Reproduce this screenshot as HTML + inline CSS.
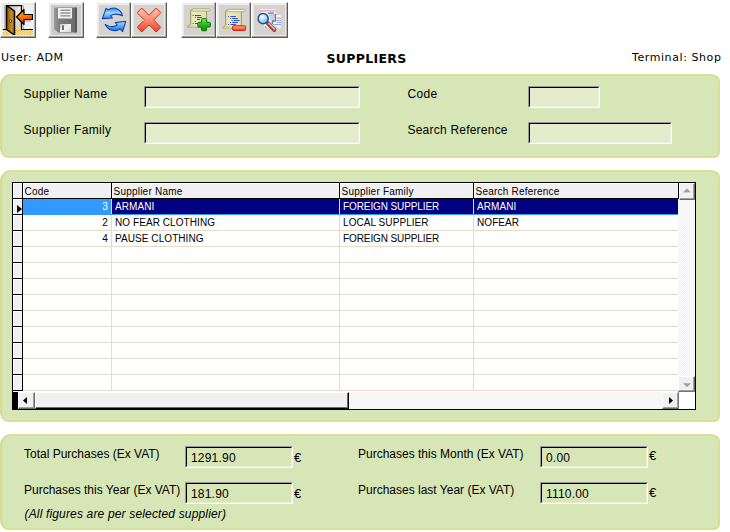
<!DOCTYPE html>
<html>
<head>
<meta charset="utf-8">
<title>Suppliers</title>
<style>
html,body{margin:0;padding:0;background:#fff;}
body{width:730px;height:532px;position:relative;overflow:hidden;font-family:"Liberation Sans",sans-serif;color:#000;}
.abs{position:absolute;}
.t{position:absolute;white-space:nowrap;line-height:14px;font-size:12px;font-family:"Liberation Sans",sans-serif;}
.ls{letter-spacing:0.35px;}
.v{font-family:"DejaVu Sans","Liberation Sans",sans-serif;font-size:11px;line-height:14px;}
.panel{position:absolute;left:0;width:716px;background:#d7e6b6;border:2px solid #d4e092;border-left-color:#d3df8e;border-radius:11px 10px 6px 8px / 11px 7px 6px 10px;box-sizing:content-box;}
.btn{position:absolute;top:2px;width:36px;height:36px;box-sizing:border-box;background:#ebebeb;border-top:1px solid #fff;border-left:1px solid #fff;border-right:1px solid #5a5a5a;border-bottom:1px solid #5a5a5a;}
.btn:after{content:"";position:absolute;left:0;top:0;right:0;bottom:0;border-right:1px solid #b4b4b4;border-bottom:1px solid #a0a0a0;}
.btn svg{position:absolute;left:2px;top:2px;}
.inp{position:absolute;box-sizing:border-box;height:22px;background:#e3edcc;border-top:1px solid #9a9a9a;border-left:1px solid #9a9a9a;border-right:1px solid #fff;border-bottom:1px solid #fff;}
.inp:after{content:"";position:absolute;left:0;top:0;right:0;bottom:0;border-top:1px solid #000;border-left:1px solid #000;border-right:1px solid #e9ece2;border-bottom:1px solid #e9ece2;}
.out{background:transparent;}
.out:after{border-right-color:#e6eed2;border-bottom-color:#e6eed2;}
/* grid */
#grid{position:absolute;left:12px;top:182px;width:684px;height:228px;background:#fff;overflow:hidden;}
#grid .h{position:absolute;top:1px;height:15px;background:#f0f0f0;box-sizing:border-box;border-top:1px solid #fff;border-left:1px solid #fff;}
#grid .hl{position:absolute;background:#000;}
#grid .gl{position:absolute;background:#e5dbc6;}
#grid .c{position:absolute;white-space:nowrap;font-size:10px;line-height:14px;letter-spacing:0.07px;font-family:"Liberation Sans",sans-serif;}
#grid .rh{position:absolute;left:1px;width:9px;height:15px;background:#f0f0f0;border-top:1px solid #fff;border-left:1px solid #fff;box-sizing:border-box;}
.sb{position:absolute;background:#f0f0f0;box-sizing:border-box;border-top:1px solid #fff;border-left:1px solid #fff;border-right:1px solid #696969;border-bottom:1px solid #696969;box-shadow:inset -1px -1px 0 #a0a0a0;}
.track{position:absolute;background:repeating-conic-gradient(#ffffff 0% 25%, #efefef 0% 50%) 0 0/2px 2px;}
</style>
</head>
<body>

<!-- toolbar -->
<div class="btn" id="b1" style="left:0px;width:36px"><svg width="30" height="30" viewBox="3 5 30 30"><defs><linearGradient id="dg" x1="0" y1="0" x2="1" y2="0"><stop offset="0" stop-color="#8a5200"/><stop offset="0.6" stop-color="#c98a20"/><stop offset="1" stop-color="#b87410"/></linearGradient><linearGradient id="ag" x1="0" y1="0" x2="0.3" y2="1"><stop offset="0" stop-color="#ffb400"/><stop offset="0.55" stop-color="#ff7a00"/><stop offset="1" stop-color="#f02800"/></linearGradient><linearGradient id="rg" x1="0" y1="0" x2="1" y2="1"><stop offset="0" stop-color="#b4ac9c"/><stop offset="0.5" stop-color="#ece8e0"/><stop offset="1" stop-color="#ccc4b4"/></linearGradient><pattern id="fl" width="3" height="2" patternUnits="userSpaceOnUse"><rect width="3" height="2" fill="#fff0d0"/><rect width="1.5" height="1" fill="#ffb02c"/><rect x="1.5" y="1" width="1.5" height="1" fill="#ffb02c"/></pattern></defs><rect x="3" y="5" width="30" height="30" fill="#f0f0f0"/><rect x="4" y="5" width="1" height="25" fill="#b8b8b8"/><rect x="23" y="5" width="1" height="25" fill="#b8b8b8"/><rect x="3" y="30" width="30" height="5" fill="url(#fl)"/><rect x="6.5" y="5.5" width="15" height="24" fill="url(#rg)" stroke="#000" stroke-width="1.3"/><rect x="15" y="27" width="6" height="3" fill="url(#fl)"/><rect x="3" y="29" width="4" height="1" fill="#000"/><rect x="21" y="29" width="12" height="1" fill="#000"/><rect x="24" y="20" width="7" height="2" fill="#c0c0c8"/><polygon points="6.5,5.5 14.5,11.2 14.5,35 6.5,29.5" fill="url(#dg)" stroke="#000" stroke-width="1.5" stroke-linejoin="round"/><rect x="9.6" y="19.8" width="1.8" height="2.6" rx="0.8" fill="#fff6a0" stroke="#000" stroke-width="0.7"/><polygon points="16.5,17 24,9.5 24,14.5 32.5,14.5 32.5,19.5 24,19.5 24,24.5" fill="url(#ag)" stroke="#000" stroke-width="1.2" stroke-linejoin="round"/></svg></div>
<div class="btn" id="b2" style="left:48px;width:36px"><svg width="30" height="30" viewBox="51 5 30 30"><defs><linearGradient id="sg" x1="0" y1="0" x2="1" y2="0"><stop offset="0" stop-color="#9a9a9a"/><stop offset="0.25" stop-color="#7c7c7c"/><stop offset="1" stop-color="#6a6a6a"/></linearGradient><linearGradient id="sl" x1="0" y1="0" x2="1" y2="1"><stop offset="0" stop-color="#c8c8c8"/><stop offset="0.5" stop-color="#f4f4f4"/><stop offset="1" stop-color="#d8d8d8"/></linearGradient></defs><rect x="51" y="5" width="30" height="30" fill="#cdcdcd"/><path d="M54.5,7.5 H76 Q77,7.5 77,8.5 V31.5 Q77,32.5 76,32.5 H58 L54,29 V8 Q54,7.5 54.5,7.5 Z" fill="url(#sg)"/><path d="M76,7.5 Q77,7.5 77,8.5 V31.5 Q77,32.5 76,32.5 H75 V7.5 Z" fill="#585858"/><rect x="58" y="8" width="14" height="10.5" fill="#efefef"/><rect x="60.5" y="9.6" width="10" height="1.3" fill="#8c8c8c"/><rect x="60.5" y="12.4" width="10" height="1.3" fill="#8c8c8c"/><rect x="60.5" y="15.2" width="10" height="1.3" fill="#8c8c8c"/><rect x="60" y="24" width="11" height="8" fill="url(#sl)"/><rect x="62" y="25.3" width="2" height="4.8" fill="#707070"/></svg></div>
<div class="btn" id="b3" style="left:96px;width:35px"><svg width="30" height="30" viewBox="5 5 30 30"><defs><linearGradient id="bg1" x1="0" y1="0" x2="0" y2="1"><stop offset="0" stop-color="#2a80e8"/><stop offset="0.45" stop-color="#a4d6ff"/><stop offset="1" stop-color="#3a88ea"/></linearGradient><linearGradient id="bg2" x1="0" y1="0" x2="0" y2="1"><stop offset="0" stop-color="#b4dcff"/><stop offset="0.5" stop-color="#58a8f4"/><stop offset="1" stop-color="#1a60d0"/></linearGradient></defs><rect x="5" y="5" width="30" height="30" fill="#d6d3ce"/><path d="M12,8.4 L8.4,18.6 L18.4,18 L16.6,15.6 C20,13.6 24.6,13.8 28.6,15.8 C26.5,9.2 20,5.8 14.2,9.8 Z" fill="url(#bg1)" stroke="#0a44b4" stroke-width="1.1" stroke-linejoin="round"/><path d="M21.2,22.6 L31.8,21.2 L28.6,31.6 L26.2,29 C20.6,32.4 14.6,30.4 11.2,24.4 C15.4,27 19.8,27.4 23.2,25 Z" fill="url(#bg2)" stroke="#0a44b4" stroke-width="1.1" stroke-linejoin="round"/></svg></div>
<div class="btn" id="b4" style="left:131px;width:36px"><svg width="30" height="30" viewBox="38.5 5 30 30"><defs><linearGradient id="xg" x1="0" y1="0" x2="0" y2="1"><stop offset="0" stop-color="#ffc0ac"/><stop offset="0.5" stop-color="#fa8870"/><stop offset="1" stop-color="#ea4c36"/></linearGradient></defs><rect x="38.5" y="5" width="30" height="30" fill="#d6d3ce"/><path d="M60.71,9.68 L63.82,12.79 L56.61,20.00 L63.82,27.21 L60.71,30.32 L53.50,23.11 L46.29,30.32 L43.18,27.21 L50.39,20.00 L43.18,12.79 L46.29,9.68 L53.50,16.89 Z" fill="#d23424" stroke="#d23424" stroke-width="3" stroke-linejoin="round"/><path d="M60.71,9.68 L63.82,12.79 L56.61,20.00 L63.82,27.21 L60.71,30.32 L53.50,23.11 L46.29,30.32 L43.18,27.21 L50.39,20.00 L43.18,12.79 L46.29,9.68 L53.50,16.89 Z" fill="url(#xg)" stroke="url(#xg)" stroke-width="1.5" stroke-linejoin="round"/></svg></div>
<div class="btn" id="b5" style="left:181px;width:35px"><svg width="30" height="30" viewBox="6 5 30 30"><defs><linearGradient id="sca" x1="0" y1="0" x2="1" y2="0"><stop offset="0" stop-color="#c4c48c"/><stop offset="0.3" stop-color="#ecebc2"/><stop offset="1" stop-color="#dfdeb0"/></linearGradient><linearGradient id="pg" x1="0" y1="0" x2="0" y2="1"><stop offset="0" stop-color="#7cec68"/><stop offset="0.45" stop-color="#2cc020"/><stop offset="1" stop-color="#0c8c08"/></linearGradient></defs><rect x="6" y="5" width="30" height="30" fill="#d6d3ce"/><path d="M14.5,9.5 H28.6 V27.5 H11 Q9.5,27.5 9.8,26 Q12.6,26 12.6,23.5 V11 Q12.8,9.5 14.5,9.5 Z" fill="url(#sca)" stroke="#90905a" stroke-width="0.8"/><rect x="14" y="8.8" width="18" height="2.2" rx="1.1" fill="#f6f5d6" stroke="#96965c" stroke-width="0.7"/><path d="M9.6,26 Q10,27.8 12,27.8 H18 V25.6 H12.6 Q12,26.2 9.6,26 Z" fill="#d0cf98"/><g fill="#2c4cc0"><rect x="14.6" y="15" width="1" height="1"/><rect x="17" y="15" width="6" height="1"/><rect x="16.8" y="17" width="1" height="1"/><rect x="19" y="17" width="5" height="1"/><rect x="16.8" y="21" width="1" height="1"/><rect x="19" y="19" width="3" height="1"/><rect x="14.6" y="23" width="1" height="1"/><rect x="17" y="23" width="3" height="1"/></g><path d="M24.4,18.6 H27.8 Q28.6,18.6 28.6,19.4 V22.4 H31.6 Q32.4,22.4 32.4,23.2 V26.2 Q32.4,27 31.6,27 H28.6 V30 Q28.6,30.8 27.8,30.8 H24.4 Q23.6,30.8 23.6,30 V27 H20.6 Q19.8,27 19.8,26.2 V23.2 Q19.8,22.4 20.6,22.4 H23.6 V19.4 Q23.6,18.6 24.4,18.6 Z" fill="url(#pg)" stroke="#0c7808" stroke-width="1"/></svg></div>
<div class="btn" id="b6" style="left:216px;width:35px"><svg width="30" height="30" viewBox="41 5 30 30"><defs><linearGradient id="scb" x1="0" y1="0" x2="1" y2="0"><stop offset="0" stop-color="#c4c48c"/><stop offset="0.3" stop-color="#ecebc2"/><stop offset="1" stop-color="#dfdeb0"/></linearGradient><linearGradient id="mg" x1="0" y1="0" x2="0" y2="1"><stop offset="0" stop-color="#ffb478"/><stop offset="0.5" stop-color="#ff7a44"/><stop offset="1" stop-color="#ec4420"/></linearGradient></defs><rect x="41" y="5" width="30" height="30" fill="#d6d3ce"/><path d="M49.5,10 H63.4 V28.5 H46 Q44.5,28.5 44.8,27 Q47.6,27 47.6,24.5 V11.5 Q47.8,10 49.5,10 Z" fill="url(#scb)" stroke="#90905a" stroke-width="0.8"/><rect x="49" y="9.3" width="18" height="2.4" rx="1.2" fill="#f6f5d6" stroke="#96965c" stroke-width="0.7"/><path d="M44.6,27 Q45,28.8 47,28.8 H53 V26.6 H47.6 Q47,27.2 44.6,27 Z" fill="#d0cf98"/><g fill="#2c4cc0"><rect x="50" y="16" width="1" height="1"/><rect x="52.4" y="16" width="5.4" height="1"/><rect x="52" y="18" width="1" height="1"/><rect x="54.2" y="18" width="5.6" height="1"/><rect x="53.6" y="20" width="1" height="1"/><rect x="55.6" y="20" width="6" height="1"/><rect x="52" y="22" width="1" height="1"/><rect x="54.2" y="22" width="5.6" height="1"/><rect x="50" y="24" width="1" height="1"/><rect x="52.4" y="24" width="5.4" height="1"/></g><rect x="54.6" y="25.8" width="13" height="4.6" rx="0.8" fill="url(#mg)" stroke="#c82010" stroke-width="1"/></svg></div>
<div class="btn" id="b7" style="left:251px;width:37px"><svg width="31" height="30" viewBox="24 5 31 30"><defs><radialGradient id="lg" cx="0.35" cy="0.3" r="0.8"><stop offset="0" stop-color="#ffffff"/><stop offset="0.5" stop-color="#b4dcff"/><stop offset="1" stop-color="#5aa8f0"/></radialGradient></defs><rect x="24" y="5" width="31" height="30" fill="#d6d3ce"/><path d="M30,9 H45 Q46,9 46,10 V15 H50 Q51,15 51,16 V27 Q51,28 50,28 H47 V26 H42 V28 H35 L34,27 Z" fill="#f6f6fa"/><path d="M45.4,14 V21 H42.4 V24" fill="none" stroke="#707890" stroke-width="1.4"/><rect x="30" y="10.4" width="16" height="1" fill="#f08090"/><rect x="38" y="12.6" width="6" height="1" fill="#50505a"/><g fill="#88a8f0"><rect x="39" y="14.6" width="6" height="1"/><rect x="40" y="16.6" width="5" height="1"/><rect x="40" y="18.6" width="4" height="1"/><rect x="46.6" y="20" width="4.4" height="1"/><rect x="46.6" y="22" width="4.4" height="1"/><rect x="43" y="24" width="8" height="1"/></g><rect x="46.6" y="17.6" width="4.4" height="1" fill="#f08090"/><path d="M35,26 Q35,28 37,28" fill="none" stroke="#9098a8" stroke-width="1"/><line x1="38.2" y1="23.6" x2="44.2" y2="29.8" stroke="#a04850" stroke-width="4.4" stroke-linecap="round"/><line x1="39" y1="23.6" x2="44.4" y2="29" stroke="#ecbcc0" stroke-width="1.4" stroke-linecap="round"/><circle cx="33.2" cy="18.6" r="5.1" fill="url(#lg)" stroke="#20508c" stroke-width="1.5"/></svg></div>

<!-- header texts -->
<div class="t v" style="left:1px;top:51px;letter-spacing:0.55px;">User: ADM</div>
<div class="t v" id="title" style="left:326.5px;top:52px;font-weight:bold;font-size:12.5px;letter-spacing:0.3px;">SUPPLIERS</div>
<div class="t v" id="term" style="left:632px;top:51px;letter-spacing:0.58px;">Terminal: Shop</div>

<!-- panel 1 -->
<div class="panel" style="top:74px;height:80px;"></div>
<div class="t ls" style="left:23.5px;top:87px;">Supplier Name</div>
<div class="t ls" style="left:23.5px;top:123px;">Supplier Family</div>
<div class="t ls" style="left:407.5px;top:87px;">Code</div>
<div class="t" style="left:407.5px;top:123px;letter-spacing:0.22px;">Search Reference</div>
<div class="inp" style="left:144px;top:86px;width:216px;"></div>
<div class="inp" style="left:144px;top:122px;width:216px;"></div>
<div class="inp" style="left:528px;top:86px;width:72px;"></div>
<div class="inp" style="left:528px;top:122px;width:144px;"></div>

<!-- panel 2 -->
<div class="panel" style="top:170px;height:248px;"></div>
<div id="grid">
<div class="hl" style="left:0;top:0;width:684px;height:1px"></div>
<div class="hl" style="left:0;top:0;width:1px;height:228px"></div>
<div class="hl" style="left:683px;top:0;width:1px;height:228px"></div>
<div class="hl" style="left:0;top:227px;width:684px;height:1px"></div>
<div class="hl" style="left:0;top:210px;width:6px;height:18px"></div>
<div class="hl" style="left:10px;top:0;width:1px;height:209px"></div>
<div class="hl" style="left:0;top:16px;width:667px;height:1px"></div>
<div class="h" style="left:1px;width:9px"></div>
<div class="h" style="left:11px;width:88px"></div>
<div class="hl" style="left:99px;top:0;width:1px;height:17px"></div>
<div class="c" style="left:12.5px;top:3px;letter-spacing:0.22px">Code</div>
<div class="h" style="left:100px;width:227px"></div>
<div class="hl" style="left:327px;top:0;width:1px;height:17px"></div>
<div class="c" style="left:101.5px;top:3px;letter-spacing:0.22px">Supplier Name</div>
<div class="h" style="left:328px;width:133px"></div>
<div class="hl" style="left:461px;top:0;width:1px;height:17px"></div>
<div class="c" style="left:329.5px;top:3px;letter-spacing:0.22px">Supplier Family</div>
<div class="h" style="left:462px;width:204px"></div>
<div class="hl" style="left:666px;top:0;width:1px;height:17px"></div>
<div class="c" style="left:463.5px;top:3px;letter-spacing:0.22px">Search Reference</div>
<div class="gl" style="left:99px;top:17px;width:1px;height:192px"></div>
<div class="gl" style="left:327px;top:17px;width:1px;height:192px"></div>
<div class="gl" style="left:461px;top:17px;width:1px;height:192px"></div>
<div class="rh" style="top:17px"></div>
<div class="hl" style="left:0;top:32px;width:11px;height:1px"></div>
<div class="gl" style="left:11px;top:32px;width:655px;height:1px"></div>
<div class="rh" style="top:33px"></div>
<div class="hl" style="left:0;top:48px;width:11px;height:1px"></div>
<div class="gl" style="left:11px;top:48px;width:655px;height:1px"></div>
<div class="rh" style="top:49px"></div>
<div class="hl" style="left:0;top:64px;width:11px;height:1px"></div>
<div class="gl" style="left:11px;top:64px;width:655px;height:1px"></div>
<div class="rh" style="top:65px"></div>
<div class="hl" style="left:0;top:80px;width:11px;height:1px"></div>
<div class="gl" style="left:11px;top:80px;width:655px;height:1px"></div>
<div class="rh" style="top:81px"></div>
<div class="hl" style="left:0;top:96px;width:11px;height:1px"></div>
<div class="gl" style="left:11px;top:96px;width:655px;height:1px"></div>
<div class="rh" style="top:97px"></div>
<div class="hl" style="left:0;top:112px;width:11px;height:1px"></div>
<div class="gl" style="left:11px;top:112px;width:655px;height:1px"></div>
<div class="rh" style="top:113px"></div>
<div class="hl" style="left:0;top:128px;width:11px;height:1px"></div>
<div class="gl" style="left:11px;top:128px;width:655px;height:1px"></div>
<div class="rh" style="top:129px"></div>
<div class="hl" style="left:0;top:144px;width:11px;height:1px"></div>
<div class="gl" style="left:11px;top:144px;width:655px;height:1px"></div>
<div class="rh" style="top:145px"></div>
<div class="hl" style="left:0;top:160px;width:11px;height:1px"></div>
<div class="gl" style="left:11px;top:160px;width:655px;height:1px"></div>
<div class="rh" style="top:161px"></div>
<div class="hl" style="left:0;top:176px;width:11px;height:1px"></div>
<div class="gl" style="left:11px;top:176px;width:655px;height:1px"></div>
<div class="rh" style="top:177px"></div>
<div class="hl" style="left:0;top:192px;width:11px;height:1px"></div>
<div class="gl" style="left:11px;top:192px;width:655px;height:1px"></div>
<div class="rh" style="top:193px"></div>
<div class="hl" style="left:0;top:208px;width:11px;height:1px"></div>
<div class="gl" style="left:11px;top:208px;width:655px;height:1px"></div>
<div class="abs" style="left:11px;top:17px;width:88px;height:16px;background:#3399ff"></div>
<div class="abs" style="left:100px;top:17px;width:227px;height:15px;background:#000080"></div>
<div class="abs" style="left:328px;top:17px;width:133px;height:15px;background:#000080"></div>
<div class="abs" style="left:462px;top:17px;width:204px;height:15px;background:#000080"></div>
<div class="abs" style="left:99px;top:32px;width:567px;height:1px;background:#3399ff"></div>
<svg class="abs" style="left:5px;top:23px" width="5" height="8" viewBox="0 0 5 8"><polygon points="0,0 5,4 0,8" fill="#000"/></svg>
<div class="c" style="left:11px;width:85px;text-align:right;top:18px;color:#fff;">3</div>
<div class="c" style="left:103px;top:18px;color:#fff;">ARMANI</div>
<div class="c" style="left:331px;top:18px;color:#fff;letter-spacing:-0.1px;">FOREIGN SUPPLIER</div>
<div class="c" style="left:465px;top:18px;color:#fff;">ARMANI</div>
<div class="c" style="left:11px;width:85px;text-align:right;top:34px;">2</div>
<div class="c" style="left:103px;top:34px;">NO FEAR CLOTHING</div>
<div class="c" style="left:331px;top:34px;">LOCAL SUPPLIER</div>
<div class="c" style="left:465px;top:34px;">NOFEAR</div>
<div class="c" style="left:11px;width:85px;text-align:right;top:50px;">4</div>
<div class="c" style="left:103px;top:50px;">PAUSE CLOTHING</div>
<div class="c" style="left:331px;top:50px;letter-spacing:-0.1px;">FOREIGN SUPPLIER</div>
<div class="track" style="left:666px;top:17px;width:17px;height:193px"></div>
<div class="sb" style="left:667px;top:1px;width:16px;height:17px"></div>
<svg class="abs" style="left:671px;top:6px" width="8" height="6" viewBox="0 0 8 6"><polygon points="0.5,5.5 4.5,1.5 8.5,5.5" fill="#fff"/><polygon points="0,4.5 4,0.5 8,4.5" fill="#a0a0a0"/></svg>
<div class="sb" style="left:666px;top:194px;width:17px;height:16px"></div>
<svg class="abs" style="left:671px;top:201px" width="8" height="5" viewBox="0 0 8 5"><polygon points="0,0.2 4,4.2 8,0.2" fill="#a0a0a0"/></svg>
<div class="track" style="left:6px;top:210px;width:661px;height:17px"></div>
<div class="sb" style="left:6px;top:210px;width:17px;height:17px"></div>
<svg class="abs" style="left:11px;top:215px" width="4" height="7" viewBox="0 0 4 7"><polygon points="4,0 0,3.5 4,7" fill="#000"/></svg>
<div class="sb" style="left:23px;top:210px;width:314px;height:17px;border-right:1px solid #000;border-bottom:1px solid #000;box-shadow:inset -1px -1px 0 #696969;"></div>
<div class="sb" style="left:650px;top:210px;width:17px;height:17px"></div>
<svg class="abs" style="left:657px;top:215px" width="4" height="7" viewBox="0 0 4 7"><polygon points="0,0 4,3.5 0,7" fill="#000"/></svg>
<div class="abs" style="left:666px;top:209px;width:17px;height:18px;background:#fff;box-sizing:border-box;border-top:1px solid #777;border-left:1px solid #777"></div>
</div><!--endgrid-->

<!-- panel 3 -->
<div class="panel" style="top:434px;height:92px;"></div>
<div class="t" style="left:24px;top:447px;">Total Purchases (Ex VAT)</div>
<div class="t" style="left:24px;top:483px;">Purchases this Year (Ex VAT)</div>
<div class="t" style="left:24.5px;top:507px;font-style:italic;letter-spacing:0.16px;">(All figures are per selected supplier)</div>
<div class="t" style="left:358px;top:447px;">Purchases this Month (Ex VAT)</div>
<div class="t" style="left:358px;top:483px;">Purchases last Year (Ex VAT)</div>
<div class="inp out" style="left:185px;top:446px;width:108px;"></div>
<div class="inp out" style="left:185px;top:482px;width:108px;"></div>
<div class="inp out" style="left:540px;top:446px;width:108px;"></div>
<div class="inp out" style="left:540px;top:482px;width:108px;"></div>
<div class="t" style="left:191px;top:451px;letter-spacing:0.2px;">1291.90</div>
<div class="t" style="left:191px;top:487px;letter-spacing:0.2px;">181.90</div>
<div class="t" style="left:546px;top:451px;letter-spacing:0.2px;">0.00</div>
<div class="t" style="left:546px;top:487px;letter-spacing:0.2px;">1110.00</div>
<div class="t" style="left:294px;top:451px;font-size:13px;">€</div>
<div class="t" style="left:294px;top:487px;font-size:13px;">€</div>
<div class="t" style="left:649px;top:449px;font-size:13px;">€</div>
<div class="t" style="left:649px;top:486px;font-size:13px;">€</div>

</body>
</html>
